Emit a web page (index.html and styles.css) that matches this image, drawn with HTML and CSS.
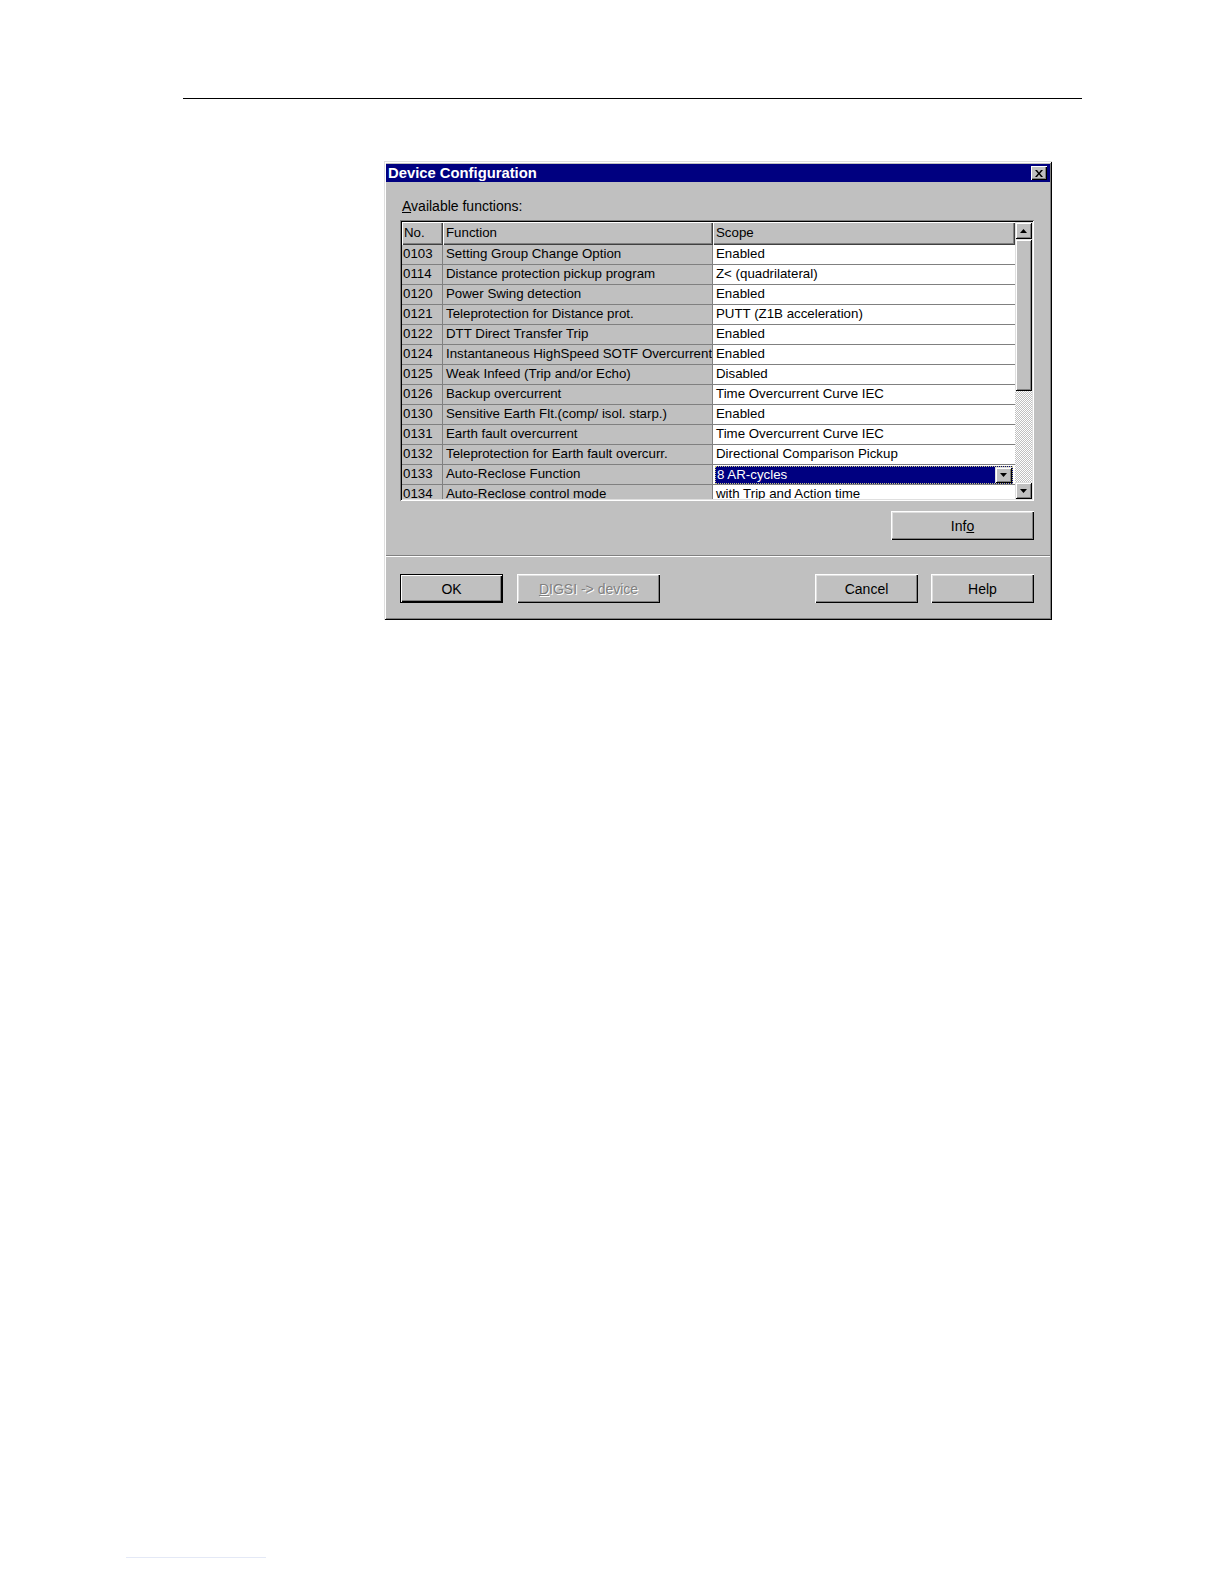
FILE: index.html
```html
<!DOCTYPE html>
<html>
<head>
<meta charset="utf-8">
<title>Device Configuration</title>
<link rel="stylesheet" href="styles.css">
</head>
<body>
<div class="page">
  <div class="top-rule"></div>
  <div class="dialog">
    <div class="titlebar">
      <span class="title">Device Configuration</span>
      <span class="close"><svg width="8" height="7" viewBox="0 0 8 7"><path d="M0 0h2l2 2.5L6 0h2L5 3.5 8 7H6L4 4.5 2 7H0l3-3.5z" fill="#000"/></svg></span>
    </div>
    <div class="content">
      <div class="label"><u>A</u>vailable functions:</div>
      <div class="grid">
        <div class="table">
          <div class="head">
            <div class="hcell c-no">No.</div>
            <div class="hcell c-fn">Function</div>
            <div class="hcell c-sc">Scope</div>
          </div>
          <div class="rows">
            <div class="row"><div class="cell c-no">0103</div><div class="cell c-fn">Setting Group Change Option</div><div class="cell c-sc">Enabled</div></div>
            <div class="row"><div class="cell c-no">0114</div><div class="cell c-fn">Distance protection pickup program</div><div class="cell c-sc">Z&lt; (quadrilateral)</div></div>
            <div class="row"><div class="cell c-no">0120</div><div class="cell c-fn">Power Swing detection</div><div class="cell c-sc">Enabled</div></div>
            <div class="row"><div class="cell c-no">0121</div><div class="cell c-fn">Teleprotection for Distance prot.</div><div class="cell c-sc">PUTT (Z1B acceleration)</div></div>
            <div class="row"><div class="cell c-no">0122</div><div class="cell c-fn">DTT Direct Transfer Trip</div><div class="cell c-sc">Enabled</div></div>
            <div class="row"><div class="cell c-no">0124</div><div class="cell c-fn">Instantaneous HighSpeed SOTF Overcurrent</div><div class="cell c-sc">Enabled</div></div>
            <div class="row"><div class="cell c-no">0125</div><div class="cell c-fn">Weak Infeed (Trip and/or Echo)</div><div class="cell c-sc">Disabled</div></div>
            <div class="row"><div class="cell c-no">0126</div><div class="cell c-fn">Backup overcurrent</div><div class="cell c-sc">Time Overcurrent Curve IEC</div></div>
            <div class="row"><div class="cell c-no">0130</div><div class="cell c-fn">Sensitive Earth Flt.(comp/ isol. starp.)</div><div class="cell c-sc">Enabled</div></div>
            <div class="row"><div class="cell c-no">0131</div><div class="cell c-fn">Earth fault overcurrent</div><div class="cell c-sc">Time Overcurrent Curve IEC</div></div>
            <div class="row"><div class="cell c-no">0132</div><div class="cell c-fn">Teleprotection for Earth fault overcurr.</div><div class="cell c-sc">Directional Comparison Pickup</div></div>
            <div class="row"><div class="cell c-no">0133</div><div class="cell c-fn">Auto-Reclose Function</div><div class="cell c-sc c-combo"><div class="combo"><span class="combo-text">8 AR-cycles</span><span class="combo-btn"><svg width="7" height="4" viewBox="0 0 7 4"><path d="M0 0h7L3.5 4z" fill="#000"/></svg></span></div></div></div>
            <div class="row"><div class="cell c-no">0134</div><div class="cell c-fn">Auto-Reclose control mode</div><div class="cell c-sc">with Trip and Action time</div></div>
          </div>
        </div>
        <div class="scrollbar">
          <div class="sbtn"><svg width="7" height="4" viewBox="0 0 7 4"><path d="M3.5 0L7 4H0z" fill="#000"/></svg></div>
          <div class="thumb"></div>
          <div class="track"></div>
          <div class="sbtn"><svg width="7" height="4" viewBox="0 0 7 4"><path d="M0 0h7L3.5 4z" fill="#000"/></svg></div>
        </div>
      </div>
      <div class="info-row">
        <div class="btn btn-info">Inf<u>o</u></div>
      </div>
    </div>
    <div class="divider"></div>
    <div class="footer">
      <div class="btn btn-ok">OK</div>
      <div class="btn btn-digsi disabled"><u>D</u>IGSI -&gt; device</div>
      <div class="spacer"></div>
      <div class="btn btn-cancel">Cancel</div>
      <div class="btn btn-help">Help</div>
    </div>
  </div>
  <div class="bottom-link"></div>
</div>
</body>
</html>
```
FILE: styles.css
```css
html, body {
  margin: 0;
  padding: 0;
  background: #ffffff;
}
.page {
  width: 1224px;
  height: 1584px;
  position: relative;
  font-family: "Liberation Sans", Arial, sans-serif;
  font-size: 13.3px;
  color: #000;
  overflow: hidden;
}
.top-rule {
  margin-left: 183px;
  width: 899px;
  height: 1px;
  background: #000;
  margin-top: 98px;
}
.dialog {
  margin-left: 384px;
  margin-top: 62px;
  width: 668px;
  height: 459px;
  box-sizing: border-box;
  background: #c0c0c0;
  padding: 3px 2px 2px 2px;
  box-shadow: inset 1px 1px 0 #dfdfdf, inset -1px -1px 0 #000, inset 2px 2px 0 #fff, inset -2px -2px 0 #808080;
  display: flex;
  flex-direction: column;
}
.titlebar {
  height: 18px;
  background: #000080;
  color: #fff;
  display: flex;
  align-items: center;
  justify-content: space-between;
  padding: 0 3px 0 2px;
  font-weight: bold;
  font-size: 14.8px;
}
.close {
  width: 16px;
  height: 14px;
  box-sizing: border-box;
  background: #c0c0c0;
  box-shadow: inset 1px 1px 0 #fff, inset -1px -1px 0 #000, inset -2px -2px 0 #808080;
  display: flex;
  align-items: center;
  justify-content: center;
}
.content {
  padding: 0 16px 0 14px;
}
.label {
  margin-top: 17px;
  height: 15px;
  line-height: 15px;
  padding-left: 2px;
  font-size: 14px;
  color: #000;
}
.grid {
  margin-top: 6px;
  height: 281px;
  box-sizing: border-box;
  padding: 2px;
  background: #fff;
  box-shadow: inset 1px 1px 0 #808080, inset -1px -1px 0 #fff, inset 2px 2px 0 #000, inset -2px -2px 0 #dfdfdf;
  display: flex;
}
.table {
  width: 613px;
  display: flex;
  flex-direction: column;
  overflow: hidden;
  background: #fff;
}
.head {
  display: flex;
  height: 23px;
  flex: none;
}
.hcell {
  box-sizing: border-box;
  height: 23px;
  line-height: 22px;
  padding-left: 3px;
  background: #c0c0c0;
  box-shadow: inset 1px 1px 0 #fff, inset -1px -1px 0 #404040, inset -2px -2px 0 #808080;
  white-space: nowrap;
}
.c-no { width: 41px; flex: none; }
.c-fn { width: 270px; flex: none; }
.c-sc { width: 302px; flex: none; }
.hcell.c-no { padding-left: 2px; }
.rows {
  flex: 1;
  overflow: hidden;
}
.row {
  display: flex;
  height: 20px;
}
.cell {
  box-sizing: border-box;
  height: 20px;
  line-height: 17px;
  padding-left: 3px;
  border-right: 1px solid #808080;
  border-bottom: 1px solid #808080;
  background: #c0c0c0;
  white-space: nowrap;
  overflow: hidden;
}
.cell.c-no { padding-left: 1px; }
.cell.c-sc {
  background: #fff;
  border-right: none;
}
.cell.c-combo {
  padding: 1px 2px 1px 2px;
  line-height: normal;
}
.combo {
  height: 18px;
  box-sizing: border-box;
  background: #000080;
  border: 1px dotted #c8c880;
  display: flex;
  align-items: center;
  justify-content: space-between;
}
.combo-text {
  color: #fff;
  padding-left: 1px;
  line-height: 16px;
}
.combo-btn {
  width: 17px;
  height: 16px;
  box-sizing: border-box;
  background: #c0c0c0;
  box-shadow: inset 1px 1px 0 #dfdfdf, inset -1px -1px 0 #000, inset 2px 2px 0 #fff, inset -2px -2px 0 #808080;
  display: flex;
  align-items: center;
  justify-content: center;
}
.scrollbar {
  width: 17px;
  flex: none;
  display: flex;
  flex-direction: column;
}
.sbtn {
  height: 17px;
  flex: none;
  box-sizing: border-box;
  background: #c0c0c0;
  box-shadow: inset 1px 1px 0 #dfdfdf, inset -1px -1px 0 #000, inset 2px 2px 0 #fff, inset -2px -2px 0 #808080;
  display: flex;
  align-items: center;
  justify-content: center;
}
.thumb {
  height: 152px;
  flex: none;
  background: #c0c0c0;
  box-shadow: inset 1px 1px 0 #dfdfdf, inset -1px -1px 0 #000, inset 2px 2px 0 #fff, inset -2px -2px 0 #808080;
}
.track {
  flex: 1;
  background: repeating-conic-gradient(#c0c0c0 0 25%, #ffffff 0 50%) 0 0 / 2px 2px;
}
.info-row {
  display: flex;
  justify-content: flex-end;
  margin-top: 10px;
}
.btn {
  box-sizing: border-box;
  height: 29px;
  background: #c0c0c0;
  display: flex;
  align-items: center;
  justify-content: center;
  box-shadow: inset 1px 1px 0 #fff, inset -1px -1px 0 #000, inset -2px -2px 0 #808080, inset 2px 2px 0 #dfdfdf;
  white-space: nowrap;
  font-size: 14px;
}
.btn-info { width: 143px; }
.divider {
  margin-top: 15px;
  height: 1px;
  background: #808080;
  border-bottom: 1px solid #fff;
}
.footer {
  display: flex;
  padding: 17px 16px 0 14px;
}
.btn-ok {
  width: 103px;
  box-shadow: inset 1px 1px 0 #000, inset -1px -1px 0 #000, inset 2px 2px 0 #fff, inset -2px -2px 0 #000, inset -3px -3px 0 #808080;
}
.btn-digsi {
  width: 143px;
  margin-left: 14px;
}
.disabled {
  color: #808080;
  text-shadow: 1px 1px 0 #fff;
}
.spacer { flex: 1; }
.btn-cancel { width: 103px; }
.btn-help { width: 103px; margin-left: 13px; }
.bottom-link {
  position: absolute;
  left: 126px;
  top: 1557px;
  width: 140px;
  height: 1px;
  background: #e4e9f6;
}
```
